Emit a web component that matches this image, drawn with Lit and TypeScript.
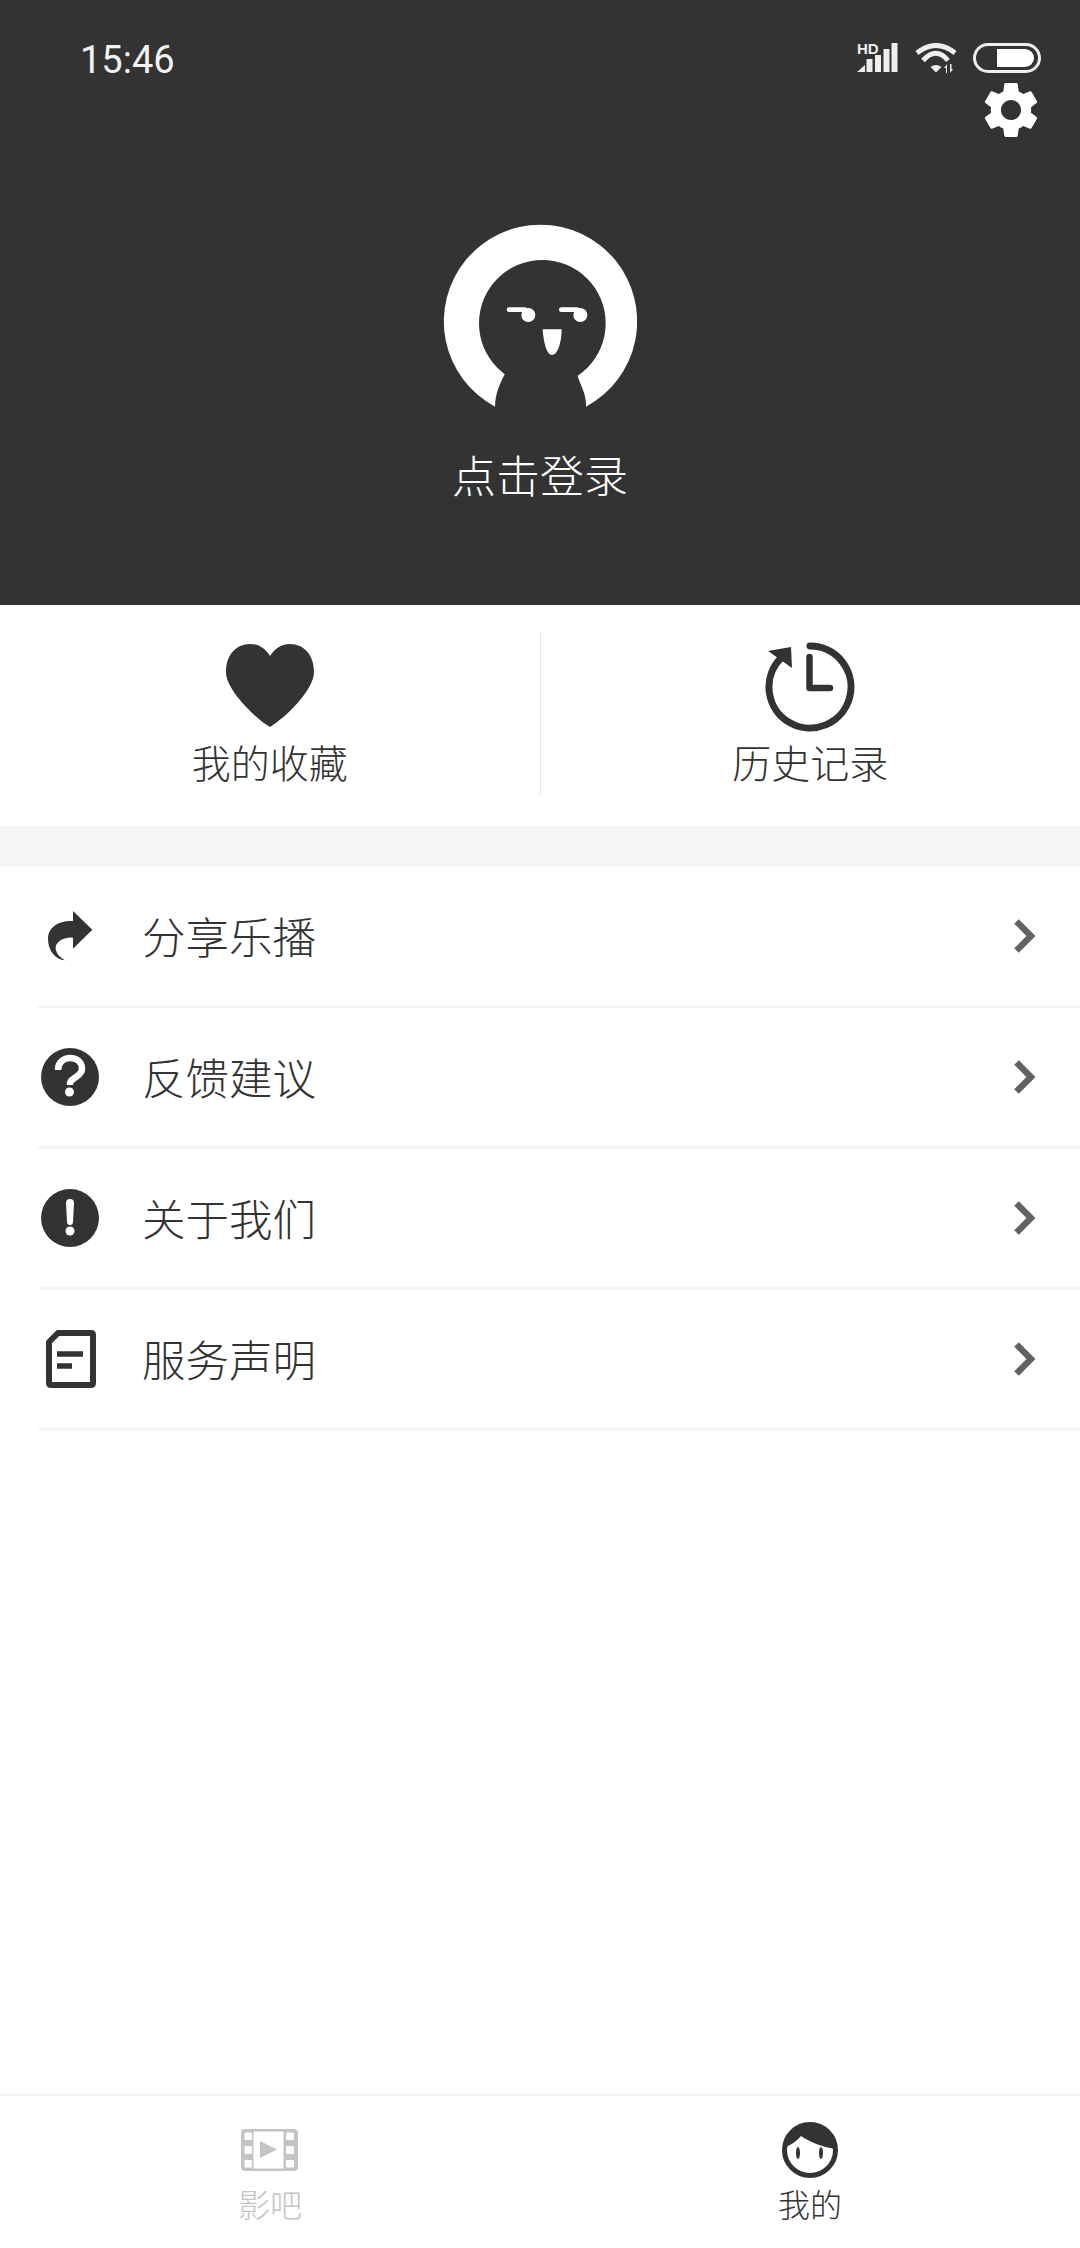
import { LitElement, html, css, svg } from "lit";
import { customElement } from "lit/decorators.js";

const gearPath =
  "M19.14 12.94c.04-.3.06-.61.06-.94 0-.32-.02-.64-.07-.94l2.03-1.58c.18-.14.23-.41.12-.61l-1.92-3.32c-.12-.22-.37-.29-.59-.22l-2.39.96c-.5-.38-1.03-.7-1.62-.94l-.36-2.54c-.04-.24-.24-.41-.48-.41h-3.84c-.24 0-.43.17-.47.41l-.36 2.54c-.59.24-1.13.57-1.62.94l-2.39-.96c-.22-.08-.47 0-.59.22L2.74 8.87c-.12.21-.08.47.12.61l2.03 1.58c-.05.3-.09.63-.09.94s.02.64.07.94l-2.03 1.58c-.18.14-.23.41-.12.61l1.92 3.32c.12.22.37.29.59.22l2.39-.96c.5.38 1.03.7 1.62.94l.36 2.54c.05.24.24.41.48.41h3.84c.24 0 .44-.17.47-.41l.36-2.54c.59-.24 1.13-.56 1.62-.94l2.39.96c.22.08.47 0 .59-.22l1.92-3.32c.12-.22.07-.47-.12-.61l-2.01-1.58zM12 15.6c-1.98 0-3.6-1.62-3.6-3.6s1.62-3.6 3.6-3.6 3.6 1.62 3.6 3.6-1.62 3.6-3.6 3.6z";

const shareIcon = svg`<svg width="64" height="58" viewBox="0 0 64 58">
  <g transform="translate(-18.330 -26.670) scale(.3333)" fill="#333">
    <path d="M160 92 L218 148 L160 205 V172 C128 170 106 188 108 205 C110 222 125 234 137 240 C105 238 85 208 85 176 C85 142 115 120 160 122 Z"/>
  </g></svg>`;

const questionIcon = svg`<svg width="64" height="58" viewBox="-3 0 64 58">
  <circle cx="29" cy="29" r="29" fill="#333"/>
  <path d="M17 22C17 14 23 10 29 10C36 10 41 14 41 21C41 26 36 28 33 30.500C30 32.500 29 33 29 37" fill="none" stroke="#fff" stroke-width="6.500"/>
  <circle cx="28.500" cy="44" r="4.500" fill="#fff"/></svg>`;

const infoIcon = svg`<svg width="64" height="58" viewBox="-3 0 64 58">
  <circle cx="29" cy="29" r="29" fill="#333"/>
  <path d="M25 14a4 4 0 0 1 8 0L32 33a3 3 0 0 1-6 0Z" fill="#fff"/>
  <circle cx="29" cy="42" r="4.500" fill="#fff"/></svg>`;

const docIcon = svg`<svg width="64" height="60" viewBox="0 0 64 60">
  <path d="M11 13L20 4H53Q55 4 55 6V54Q55 56 53 56H13Q11 56 11 54Z" fill="none" stroke="#333" stroke-width="6" stroke-linejoin="round"/>
  <path d="M19 25H45M19 37H34" stroke="#333" stroke-width="5.700" fill="none"/></svg>`;

const rows = [
  { icon: shareIcon, label: "分享乐播" },
  { icon: questionIcon, label: "反馈建议" },
  { icon: infoIcon, label: "关于我们" },
  { icon: docIcon, label: "服务声明" },
];

@customElement("app-root")
export class AppRoot extends LitElement {
  static styles = css`
    :host {
      display: flex;
      flex-direction: column;
      height: 2248px;
      background: #fff;
      color: #333;
      font-family: "Noto Sans CJK SC", "Noto Sans", sans-serif;
      font-weight: 300;
    }
    svg { display: block; }
    .header {
      height: 605px;
      background: #333;
      color: #fff;
      display: flex;
      flex-direction: column;
      align-items: center;
    }
    .status {
      align-self: stretch;
      height: 82px;
      box-sizing: border-box;
      padding: 43px 39px 0 80px;
      display: flex;
      justify-content: space-between;
      align-items: flex-start;
    }
    .time {
      font-family: Roboto, sans-serif;
      font-weight: 400;
      font-size: 38px;
      line-height: 34px;
      color: #f2f2f2;
    }
    .status-icons { display: flex; gap: 16px; }
    .signal { margin-top: -6px; }
    .gear-row {
      align-self: stretch;
      display: flex;
      justify-content: flex-end;
      padding-right: 41px;
    }
    .avatar { margin-top: 86px; }
    .login {
      margin-top: 36px;
      font-size: 44px;
      line-height: 60px;
    }
    .quick {
      height: 221px;
      box-sizing: border-box;
      padding: 27px 0 30px;
      display: flex;
    }
    .quick-item {
      flex: 1;
      padding-top: 10px;
      display: flex;
      flex-direction: column;
      align-items: center;
      font-size: 39px;
      line-height: 50px;
    }
    .quick-item + .quick-item { border-left: 1px solid #e6e6e6; }
    .quick-item span { margin-top: 4px; }
    .gap { height: 41px; background: #f5f5f5; }
    .row {
      height: 141px;
      box-sizing: border-box;
      margin-left: 38px;
      border-bottom: 3px solid #f6f6f6;
      display: flex;
      align-items: center;
      font-size: 43.500px;
    }
    .row:last-child { margin-left: 0; padding-left: 38px; }
    .row .icon { margin-right: 40px; }
    .row .label { flex: 1; padding-bottom: 2px; }
    .row .chev { margin-right: 45px; }
    .spacer { flex: 1; }
    .nav {
      height: 155px;
      box-sizing: border-box;
      border-top: 3px solid #f5f5f5;
      padding-top: 24px;
      display: flex;
    }
    .nav-item {
      flex: 1;
      display: flex;
      flex-direction: column;
      align-items: center;
      font-size: 32px;
      line-height: 40px;
    }
    .nav-item span { margin-top: 3px; }
    .nav-item.off { color: #c4c4c4; }
  `;

  render() {
    return html`
      <div class="header">
        <div class="status">
          <div class="time">15:46</div>
          <div class="status-icons">
            <svg class="signal" width="42" height="36" viewBox="0 -6 42 36">
              <text x="0" y="11" font-family="Liberation Sans" font-weight="700" font-size="15" fill="#eee">HD</text>
              <path d="M0 29L8 22V29ZM9.500 29V16H15.500V29ZM18 29V12H24V29ZM26.500 29V6H32.500V29ZM34.500 29V0H40.500V29Z" fill="#eee"/>
            </svg>
            <svg width="42" height="30" viewBox="0 0 42 30">
              <path d="M2 10Q21-5 40 10M8 17.500Q21 3 33 17.500" fill="none" stroke="#eee" stroke-width="5"/>
              <path d="M15.500 24Q21 20 26.500 24L21 29.500Z" fill="#eee"/>
              <path d="M31 30v-5h-2l3-4V30ZM35 21v9l3-4h-1.500V21Z" fill="#eee"/>
            </svg>
            <svg width="68" height="30" viewBox="0 0 68 30">
              <rect x="1.500" y="1.500" width="65" height="27" rx="13.500" fill="none" stroke="#eee" stroke-width="3"/>
              <path d="M24 6H52A9 9 0 0 1 52 24H24Z" fill="#fff"/>
            </svg>
          </div>
        </div>
        <div class="gear-row">
          <svg width="56" height="56" viewBox="2.500 2 19 20"><path d="${gearPath}" fill="#fff"/></svg>
        </div>
        <svg class="avatar" width="194" height="184" viewBox="130 72 580 552">
          <path d="M285 620A290 290 0 1 1 558 620Z" fill="#fff"/>
          <circle cx="427" cy="370" r="190" fill="#333"/>
          <path d="M285 622C285 580 300 550 318 515L530 520C540 555 560 580 558 622Z" fill="#333"/>
          <rect x="320" y="322" width="62" height="14" rx="7" fill="#fff"/>
          <circle cx="385" cy="345" r="21" fill="#fff"/>
          <rect x="477" y="322" width="62" height="14" rx="7" fill="#fff"/>
          <circle cx="541" cy="345" r="21" fill="#fff"/>
          <path d="M428 388H485C485 420 475 465 456 465C438 465 430 420 428 388Z" fill="#fff"/>
        </svg>
        <div class="login">点击登录</div>
      </div>

      <div class="quick">
        <div class="quick-item">
          <svg width="90" height="90" viewBox="0 0 90 90">
            <path d="M45 14C40 6 33 2 25 2C11 2 1 13 1 30C1 48 30 76 45 85C60 76 89 48 89 30C89 13 79 2 65 2C57 2 50 6 45 14Z" fill="#333"/>
          </svg>
          <span>我的收藏</span>
        </div>
        <div class="quick-item">
          <svg width="90" height="90" viewBox="0 0 90 90">
            <path d="M45 4A41 41 0 1 1 16 16" fill="none" stroke="#333" stroke-width="7" stroke-linecap="round"/>
            <path d="M3 9L26 5L27 26Z" fill="#333"/>
            <path d="M44.500 15V46H65" fill="none" stroke="#333" stroke-width="6.500" stroke-linecap="round" stroke-linejoin="round"/>
          </svg>
          <span>历史记录</span>
        </div>
      </div>

      <div class="gap"></div>

      ${rows.map(
        (r) => html`
          <div class="row">
            <div class="icon">${r.icon}</div>
            <div class="label">${r.label}</div>
            <svg class="chev" width="22" height="36" viewBox="0 0 22 36">
              <path d="M3.500 3.500L18 18L3.500 32.500" fill="none" stroke="#616166" stroke-width="6.500"/>
            </svg>
          </div>
        `
      )}

      <div class="spacer"></div>

      <div class="nav">
        <div class="nav-item off">
          <svg width="58" height="60" viewBox="0 -9 58 60">
            <path fill-rule="evenodd" d="M4 0H53Q57 0 57 4V38Q57 42 53 42H4Q0 42 0 38V4Q0 0 4 0ZM3.500 5V10Q3.500 11 5 11H9.500Q11 11 11 10V5Q11 3.500 9.500 3.500H5Q3.500 3.500 3.500 5ZM3.500 18V24Q3.500 25 5 25H9.500Q11 25 11 24V18Q11 17 9.500 17H5Q3.500 17 3.500 18ZM3.500 32V37Q3.500 38.500 5 38.500H9.500Q11 38.500 11 37V32Q11 31 9.500 31H5Q3.500 31 3.500 32ZM12.500 2.500V39.500H42.500V2.500ZM45 5V10Q45 11 46.500 11H51.500Q53 11 53 10V5Q53 3.500 51.500 3.500H46.500Q45 3.500 45 5ZM45 18V24Q45 25 46.500 25H51.500Q53 25 53 24V18Q53 17 51.500 17H46.500Q45 17 45 18ZM45 32V37Q45 38.500 46.500 38.500H51.500Q53 38.500 53 37V32Q53 31 51.500 31H46.500Q45 31 45 32Z" fill="#c4c4c4"/>
            <path d="M19 12L36 20.500L19 29Z" fill="#c4c4c4"/>
          </svg>
          <span>影吧</span>
        </div>
        <div class="nav-item">
          <svg width="56" height="60" viewBox="0 0 56 60">
            <ellipse cx="28" cy="30" rx="25.500" ry="25.500" fill="none" stroke="#333" stroke-width="5"/>
            <path d="M3 27C3 14 14 4 28 4C42 4 53 14 53 29C40 27 28 22 19 16C15 21 9 25 3 27Z" fill="#333"/>
            <ellipse cx="16" cy="33" rx="2" ry="6" fill="#333"/>
            <ellipse cx="39" cy="33" rx="2" ry="6" fill="#333"/>
          </svg>
          <span>我的</span>
        </div>
      </div>
    `;
  }
}
